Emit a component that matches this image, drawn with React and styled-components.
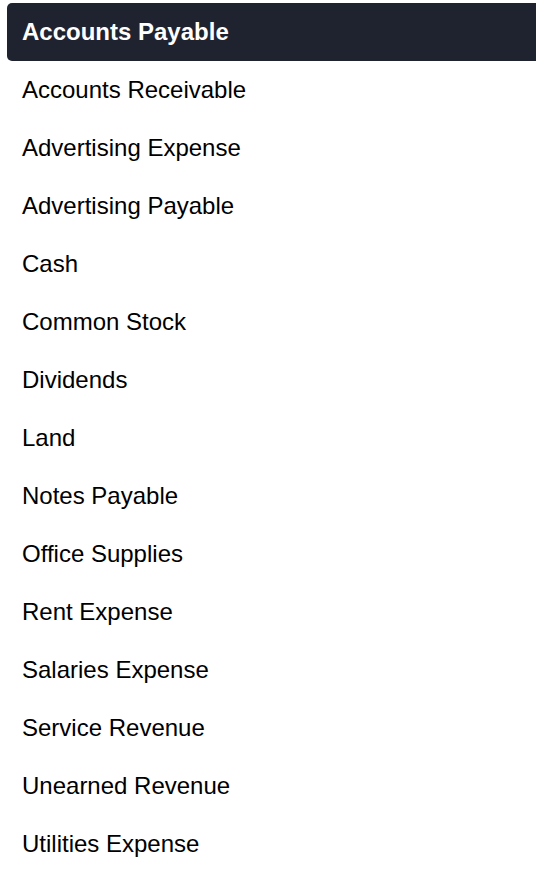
import React from 'react';
import styled, { createGlobalStyle } from 'styled-components';

const GlobalStyle = createGlobalStyle`
  html, body {
    margin: 0;
    padding: 0;
    background: #ffffff;
  }
  body {
    font-family: "Liberation Sans", Arial, sans-serif;
  }
`;

const List = styled.ul`
  list-style: none;
  margin: 0;
  padding: 3px 0 0 7px;
`;

// list runs on past the right edge in the original, so only round the left side
const Item = styled.li`
  display: flex;
  align-items: center;
  height: 58px;
  padding-left: 15px;
  border-radius: 5px 0 0 5px;
  font-size: 24px;
  font-weight: ${(p) => (p.active ? 700 : 400)};
  color: ${(p) => (p.active ? '#ffffff' : '#000000')};
  background: ${(p) => (p.active ? '#1f2330' : 'transparent')};
  cursor: pointer;
`;

const accounts = [
  'Accounts Payable',
  'Accounts Receivable',
  'Advertising Expense',
  'Advertising Payable',
  'Cash',
  'Common Stock',
  'Dividends',
  'Land',
  'Notes Payable',
  'Office Supplies',
  'Rent Expense',
  'Salaries Expense',
  'Service Revenue',
  'Unearned Revenue',
  'Utilities Expense',
];

const App = () => (
  <>
    <GlobalStyle />
    <List>
      {accounts.map((name, i) => (
        <Item key={name} active={i === 0}>{name}</Item>
      ))}
    </List>
  </>
);

export default App;
